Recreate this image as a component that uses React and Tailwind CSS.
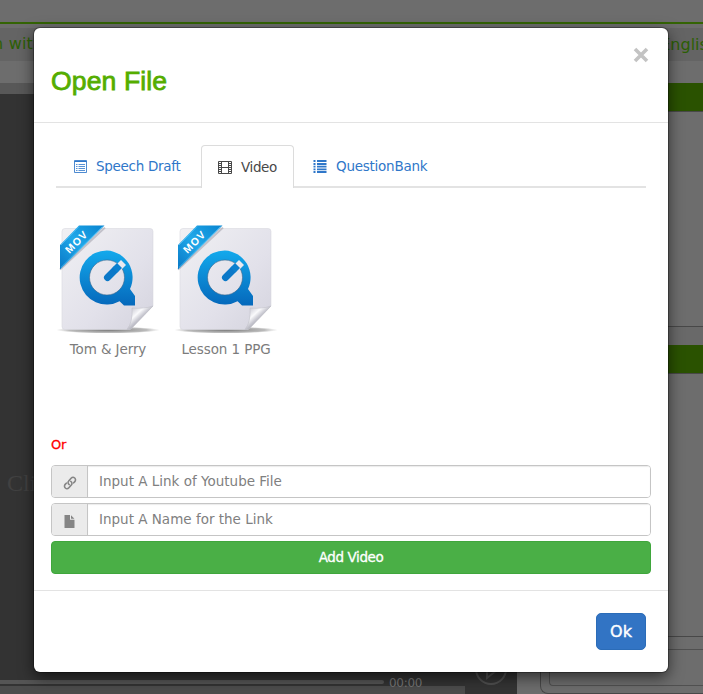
import React from "react";

function ListAltIcon() {
  return (
    <svg width="13" height="13" viewBox="0 0 13 13" fill="none" stroke="currentColor">
      <path d="M.5 .5h12v12H.5z" strokeOpacity=".85" />
      <path d="M.5 1.500h12" />
      <path d="M2 4.500h1.500M2 6.500h1.500M2 8.500h1.500M2 10.500h1.500M4.500 4.500h6.500M4.500 6.500h6.500M4.500 8.500h6.500M4.500 10.500h6.500" strokeOpacity=".8" />
    </svg>
  );
}

function FilmIcon() {
  return (
    <svg width="14" height="13" viewBox="0 0 14 13" fill="none" stroke="currentColor">
      <path d="M.5 .5h13v12H.5zM3.5 .5v12M10.5 .5v12M3.5 6.5h7" />
      <path d="M1 2.5h2M1 4.5h2M1 6.5h2M1 8.5h2M1 10.5h2M11 2.5h2M11 4.5h2M11 6.5h2M11 8.5h2M11 10.5h2" />
    </svg>
  );
}

function ListIcon() {
  return (
    <svg width="14" height="13" viewBox="0 0 14 13" fill="currentColor">
      <path d="M.5 0h2v2h-2zM4 0h9.500v2H4zM.5 3h2v1.900h-2zM4 3h9.500v1.900H4zM.5 5.700h2v1.900h-2zM4 5.700h9.500v1.900H4zM.5 8.400h2v1.900h-2zM4 8.400h9.500v1.900H4zM.5 11h2V13h-2zM4 11h9.500V13H4z" />
    </svg>
  );
}

function LinkIcon() {
  return (
    <svg width="14" height="14" viewBox="0 0 14 14" fill="none" stroke="currentColor" strokeWidth="1.6" strokeLinecap="round">
      <path d="M6.200 8.600C4.900 7.900 4.700 6.100 5.700 5L8.100 2.300c1-1.100 2.600-1.200 3.600-.3s1.100 2.500.1 3.600L10.700 6.800" />
      <path d="M7.800 5.400c1.300.7 1.500 2.500.5 3.600l-2.400 2.700c-1 1.100-2.600 1.200-3.600.3s-1.100-2.500-.1-3.600L3.300 7.200" />
    </svg>
  );
}

function FileIcon() {
  return (
    <svg width="11" height="13" viewBox="0 0 11 13" fill="currentColor">
      <path d="M.5 0H6v4.800h4.500V12.500q0 .5-.5.500H1q-.5 0-.5-.5z" />
      <path d="M7 .2l3.400 3.600H7z" />
    </svg>
  );
}

function MovIcon({ id }) {
  return (
    <svg width="106" height="114" viewBox="0 0 106 114">
      <defs>
        <linearGradient id={id + "page"} x1="0" y1="0" x2="1" y2="1">
          <stop offset="0" stopColor="#f0f0f3" />
          <stop offset=".6" stopColor="#e2e1ea" />
          <stop offset="1" stopColor="#d4d3de" />
        </linearGradient>
        <linearGradient id={id + "blue"} x1="0" y1="0" x2="0" y2="1">
          <stop offset="0" stopColor="#13a9ec" />
          <stop offset="1" stopColor="#0568bb" />
        </linearGradient>
        <linearGradient id={id + "band"} x1="0" y1="1" x2="1" y2="0">
          <stop offset="0" stopColor="#0878c6" />
          <stop offset=".5" stopColor="#20a8e9" />
          <stop offset="1" stopColor="#0884d0" />
        </linearGradient>
        <linearGradient id={id + "fold"} x1="0" y1="0" x2="1" y2="1">
          <stop offset="0" stopColor="#b4b4be" />
          <stop offset=".22" stopColor="#dcdce3" />
          <stop offset=".36" stopColor="#fafafc" />
          <stop offset=".5" stopColor="#c6c6cf" />
          <stop offset=".62" stopColor="#aaaab2" />
        </linearGradient>
        <radialGradient id={id + "shade"}>
          <stop offset="0" stopColor="#555" stopOpacity=".8" />
          <stop offset=".75" stopColor="#777" stopOpacity=".5" />
          <stop offset="1" stopColor="#999" stopOpacity="0" />
        </radialGradient>
      </defs>
      <ellipse cx="53" cy="107" rx="52" ry="3.5" fill={"url(#" + id + "shade)"} />
      <path d="M10 5.500H95q3 0 3 3V83L75 106.500H10q-3 0-3-3V8.500q0-3 3-3z" fill={"url(#" + id + "page)"} stroke="#d8d8df" strokeWidth=".6" />
      <path d="M98 83q-8 3-21 2 1 14-5 21.500h3.500z" fill={"url(#" + id + "fold)"} stroke="#bcbcc5" strokeWidth=".5" />
      <path
        d="M52 27.500a27 27 0 1 0 12.600 50.700L69 82.500h11v-9.500l-5-7a27 27 0 0 0-23-38.500zM52 37a17.500 17.500 0 1 1 0 35 17.500 17.500 0 0 1 0-35z"
        fillRule="evenodd"
        fill={"url(#" + id + "blue)"}
      />
      <circle cx="52" cy="54.500" r="17.500" fill="none" stroke="#37658b" strokeWidth=".6" />
      <path d="M61.500 41.500l4.500-4.500 5 5-4.500 4.500z" fill="#e9e9ef" />
      <path d="M52.500 54.500L60 47" stroke="#0b78c8" strokeWidth="7" strokeLinecap="round" />
      <path d="M57.500 44.500l4.500-4.500 5 5-4.500 4.500z" fill="#0b80cf" />
      <path d="M5 46.500L50 4.500" stroke="#777786" strokeWidth="2" opacity=".35" />
      <path d="M24 2.500H49.500L5 46.500V22z" fill={"url(#" + id + "band)"} />
      <path d="M47.500 3.500L6 44.500M24 3.500L6 22" stroke="#63cdfa" strokeWidth=".7" fill="none" />
      <text transform="translate(14.500 31) rotate(-45)" fontFamily="Liberation Sans, sans-serif" fontWeight="bold" fontSize="10.500" fill="#fff" textLength="26">MOV</text>
    </svg>
  );
}

function Backdrop() {
  return (
    <div className="flex h-[694px] w-[703px] flex-col overflow-hidden bg-[#6d6d6d]">
      <div className="h-[24px] shrink-0 border-b-2 border-[#346404]" />
      <div className="mt-[4px] flex h-[33px] shrink-0 items-center justify-between bg-[#646464] text-[16px] text-[#2c5f04]">
        <span className="-ml-[7px] whitespace-nowrap pb-px tracking-[0.2px]">n with</span>
        <span className="-mr-[15px] whitespace-nowrap">English</span>
      </div>
      <div className="h-[22px] shrink-0" />
      <div className="flex h-[611px] shrink-0">
        <div className="flex w-[517px] flex-col bg-[#333]">
          <div className="h-[11px] bg-[#585858]" />
          <div className="flex h-[584px] items-center">
            <span className="ml-[7px] mt-[193px] font-['Liberation_Serif',serif] text-[24px] text-[#414141]">Click</span>
          </div>
          <div className="flex grow bg-[#505050]">
            <div className="flex w-[465px] flex-col bg-[#4c4c4c]">
              <div className="flex h-[8px] items-center bg-[#333]">
                <div className="h-[4px] w-[384px] rounded-r bg-[#555]" />
                <span className="ml-[5px] mt-[2px] text-[12px] leading-none tracking-[-0.3px] text-[#777]">00:00</span>
              </div>
            </div>
            <div className="flex grow justify-center bg-[#343434]">
              <svg width="38" height="16" viewBox="0 0 38 16" className="-mt-[9px]" fill="none" stroke="#505050" strokeWidth="2">
                <path d="M4 0a15 15 0 0 0 30 0M15 0v9l10-8" />
              </svg>
            </div>
          </div>
        </div>
        <div className="flex grow flex-col pl-[23px]">
          <div className="h-[28px] shrink-0 bg-[#2a5200]" />
          <div className="h-[216px] shrink-0 border-y border-[#484848]" />
          <div className="h-[18px] shrink-0 bg-[#696969]" />
          <div className="h-[28px] shrink-0 bg-[#2a5200]" />
          <div className="h-[264px] shrink-0 border-y border-[#484848]" />
          <div className="mt-[4px] h-[53px] shrink-0 rounded-bl-lg border-b border-l border-[#484848] pl-[8px] pt-[8px]">
            <div className="h-[37px] rounded-l border border-r-0 border-[#505050]" />
          </div>
        </div>
      </div>
    </div>
  );
}

function Field({ icon, placeholder }) {
  return (
    <div className="flex h-[33px] overflow-hidden rounded-[4px] border border-[#c5c5c5]">
      <div className="flex w-[36px] shrink-0 items-center justify-center border-r border-[#c5c5c5] bg-[#ebebeb] pt-[3px] text-[#858585]">{icon}</div>
      <input
        placeholder={placeholder}
        className="min-w-0 grow bg-white pb-[1px] pl-[11px] text-[13.5px] shadow-[inset_0_1px_1px_rgba(0,0,0,0.08)] outline-none placeholder:text-[#808080]"
      />
    </div>
  );
}

function VideoFile({ id, name }) {
  return (
    <div className="flex w-[118px] flex-col items-center">
      <MovIcon id={id} />
      <span className="mt-[3px] whitespace-nowrap text-[13.5px] leading-[18px] tracking-[-0.1px] text-[#7c7c7c]">{name}</span>
    </div>
  );
}

function OpenFileDialog() {
  return (
    <div className="absolute left-[34px] top-[28px] flex h-[644px] w-[634px] flex-col rounded-[6px] bg-white shadow-[0_5px_15px_rgba(0,0,0,0.6),0_0_0_1px_rgba(0,0,0,0.3)]">
      <div className="flex h-[95px] shrink-0 justify-between border-b border-[#e3e3e3] pl-[17px] pr-[19px]">
        <h1 className="mt-[37px] font-['Liberation_Sans',sans-serif] text-[26.6px] leading-[32px] tracking-[0.1px] text-[#55ad00] [-webkit-text-stroke:0.8px_#55ad00]">Open File</h1>
        <button className="mt-[19px] h-[16px] w-[16px]" aria-label="Close">
          <svg width="16" height="16" viewBox="0 0 16 16" stroke="#c3c3c3" strokeWidth="3.6">
            <path d="M2 2l12 12M14 2L2 14" />
          </svg>
        </button>
      </div>
      <div className="flex h-[468px] shrink-0 flex-col border-b border-[#e3e3e3] px-[17px] pt-[22px]">
        <div className="mx-[5px] flex h-[43px] shrink-0 text-[13.5px] text-[#2f77c9]">
          <div className="flex w-[145px] items-center gap-[9px] border-b-2 border-[#e3e3e3] pl-[18px] pt-[2px]">
            <ListAltIcon />
            <span className="whitespace-nowrap tracking-[-0.3px]">Speech Draft</span>
          </div>
          <div className="flex w-[93px] items-center gap-[9px] rounded-t-[4px] border border-b-0 border-[#dcdcdc] pl-[16px] text-[#484848]">
            <FilmIcon />
            <span className="tracking-[-0.4px]">Video</span>
          </div>
          <div className="flex grow items-center gap-[9px] border-b-2 border-[#e3e3e3] pl-[19px] pt-[2px]">
            <ListIcon />
            <span className="tracking-[-0.25px]">QuestionBank</span>
          </div>
        </div>
        <div className="-ml-[2px] mt-[35px] flex h-[213px] shrink-0">
          <VideoFile id="a" name="Tom &amp; Jerry" />
          <VideoFile id="b" name="Lesson 1 PPG" />
        </div>
        <div className="h-[29px] text-[13px] leading-[18px] tracking-[-0.3px] text-[#f00] [-webkit-text-stroke:0.3px_#f00]">Or</div>
        <div className="flex flex-col gap-[5px]">
          <Field icon={<LinkIcon />} placeholder="Input A Link of Youtube File" />
          <Field icon={<FileIcon />} placeholder="Input A Name for the Link" />
          <button className="h-[33px] rounded-[4px] border border-[#3fa63c] bg-[#4aaf46] text-[13.5px] tracking-[-0.4px] text-white [-webkit-text-stroke:0.3px_white]">Add Video</button>
        </div>
      </div>
      <div className="flex justify-end pr-[22px] pt-[22px]">
        <button className="h-[37px] w-[50px] rounded-[5px] border border-[#2b6cb8] bg-[#3274c4] text-[16px] text-white [-webkit-text-stroke:0.4px_white]">Ok</button>
      </div>
    </div>
  );
}

export default function App() {
  return (
    <div className="relative h-[694px] w-[703px] overflow-hidden font-['DejaVu_Sans',sans-serif]">
      <Backdrop />
      <OpenFileDialog />
    </div>
  );
}
